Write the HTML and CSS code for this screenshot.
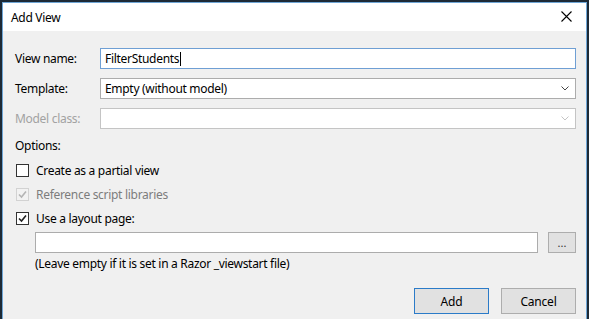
FILE: index.html
```html
<!DOCTYPE html>
<html lang="en">

<head>
    <meta charset="UTF-8">
    <title>Add View</title>
    <link rel="stylesheet" href="styles.css">
</head>

<body>
    <div class="window">
        <div class="titlebar">
            <span class="title">Add View</span>
            <span class="close">
                <svg width="11" height="11" viewBox="0 0 11 11">
                    <path d="M0.5 0.5 L10.5 10.5 M10.5 0.5 L0.5 10.5" stroke="#000" stroke-width="1.1" fill="none"/>
                </svg>
            </span>
        </div>

        <div class="content">
            <div class="field-row">
                <label>View name:</label>
                <div class="textbox focused">FilterStudents<span class="caret"></span></div>
            </div>

            <div class="field-row">
                <label>Template:</label>
                <div class="combo">
                    <span>Empty (without model)</span>
                    <svg class="chevron" width="8" height="5" viewBox="0 0 8 5">
                        <path d="M0.5 0.5 L4 4 L7.5 0.5" stroke="#444" stroke-width="1" fill="none"/>
                    </svg>
                </div>
            </div>

            <div class="field-row disabled">
                <label>Model class:</label>
                <div class="combo">
                    <span></span>
                    <svg class="chevron" width="8" height="5" viewBox="0 0 8 5">
                        <path d="M0.5 0.5 L4 4 L7.5 0.5" stroke="#c4c4c4" stroke-width="1" fill="none"/>
                    </svg>
                </div>
            </div>

            <div class="options-label">Options:</div>

            <div class="check-row">
                <span class="checkbox"></span>
                <span>Create as a partial view</span>
            </div>

            <div class="check-row disabled">
                <span class="checkbox">
                    <svg width="11" height="11" viewBox="0 0 11 11">
                        <path d="M2 5.5 L4.5 8 L9 2.5" stroke="#b4b4b4" stroke-width="1.6" fill="none"/>
                    </svg>
                </span>
                <span>Reference script libraries</span>
            </div>

            <div class="check-row">
                <span class="checkbox">
                    <svg width="11" height="11" viewBox="0 0 11 11">
                        <path d="M2 5.5 L4.5 8 L9 2.5" stroke="#222" stroke-width="1.6" fill="none"/>
                    </svg>
                </span>
                <span>Use a layout page:</span>
            </div>

            <div class="layout-row">
                <div class="textbox"></div>
                <button class="browse">...</button>
            </div>

            <div class="hint">(Leave empty if it is set in a Razor _viewstart file)</div>

            <div class="actions">
                <button class="btn default">Add</button>
                <button class="btn">Cancel</button>
            </div>
        </div>
    </div>
</body>

</html>
```

FILE: styles.css
```css
* {
    margin: 0;
    padding: 0;
    box-sizing: border-box;
}

html,
body {
    height: 100%;
}

body {
    background-color: #1d2a36;
    padding: 2px 2px 0 2px;
    font-family: "Noto Sans", "Liberation Sans", sans-serif;
    font-size: 12px;
    letter-spacing: -0.3px;
    color: #000;
    overflow: hidden;
}

.window {
    height: 100%;
    border: 1px solid #6fa6d6;
    border-bottom: none;
    background-color: #f0f0f0;
}

/* --- title bar --- */
.titlebar {
    height: 28px;
    background-color: #fff;
    display: flex;
    align-items: center;
    justify-content: space-between;
    padding: 0 8px 0 8px;
}

.title {
    font-size: 12px;
    color: #000;
}

.close {
    display: flex;
    margin-right: 6px;
    margin-top: -1px;
}

/* --- form body --- */
.content {
    padding: 17px 10px 0 12px;
}

.field-row {
    display: grid;
    grid-template-columns: 85px 1fr;
    align-items: center;
    height: 21px;
    margin-bottom: 9px;
}

.field-row.disabled label {
    color: #a2a2a2;
}

.textbox,
.combo {
    height: 21px;
    background-color: #fff;
    border: 1px solid #acacac;
    padding: 0 4px;
    display: flex;
    align-items: center;
}

.textbox.focused {
    border-color: #6f9fd4;
}

.caret {
    display: inline-block;
    width: 1px;
    height: 14px;
    background-color: #000;
    margin-left: 1px;
}

.combo {
    justify-content: space-between;
    padding-right: 6px;
}

.field-row.disabled .combo {
    border-color: #c4c4c4;
}

.options-label {
    line-height: 16px;
    margin-bottom: 8px;
}

.check-row {
    display: flex;
    align-items: center;
    height: 16px;
    margin-bottom: 8px;
    padding-left: 1px;
}

.checkbox {
    width: 13px;
    height: 13px;
    border: 1px solid #333;
    background-color: #fff;
    margin-right: 7px;
    display: flex;
    align-items: center;
    justify-content: center;
}

.check-row.disabled {
    color: #7d7d7d;
}

.check-row.disabled .checkbox {
    border-color: #d2d2d2;
    background-color: #f2f2f2;
}

.check-row:last-of-type {
    margin-bottom: 5px;
}

.layout-row {
    display: flex;
    padding-left: 20px;
    gap: 10px;
    margin-top: -2px;
}

.layout-row .textbox {
    flex: 1;
    border-color: #acacac;
}

.browse {
    width: 28px;
    height: 21px;
    background-color: #e1e1e1;
    border: 1px solid #adadad;
    font-family: inherit;
    font-size: 11px;
    line-height: 14px;
    color: #333;
}

.hint {
    padding-left: 20px;
    line-height: 16px;
    margin-top: 3px;
}

.actions {
    display: flex;
    justify-content: flex-end;
    gap: 12px;
    margin-top: 16px;
}

.btn {
    width: 75px;
    height: 26px;
    background-color: #e1e1e1;
    border: 1px solid #adadad;
    font-family: inherit;
    font-size: 12px;
    letter-spacing: -0.2px;
    color: #000;
}

.btn.default {
    border-color: #2b7bc8;
}
```
